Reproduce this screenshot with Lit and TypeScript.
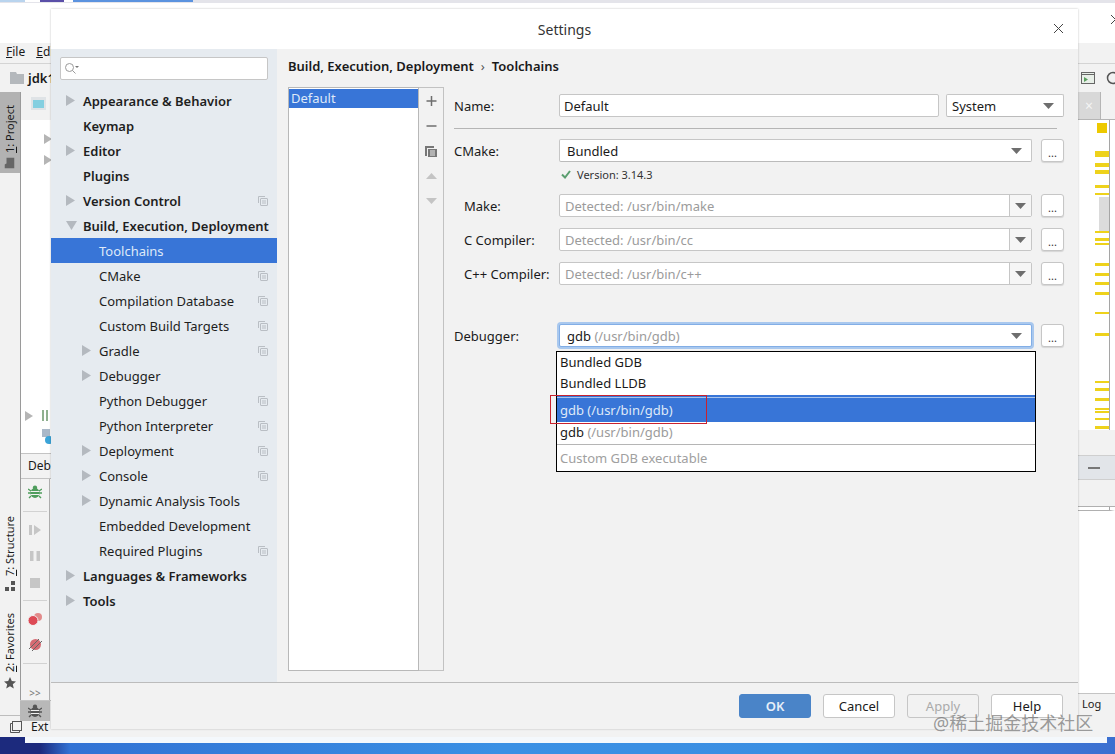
import { LitElement, html, css, svg } from 'lit';
import { customElement } from 'lit/decorators.js';

type TreeItem = { label: string; level: 0 | 1; arrow?: 'right' | 'down'; copy?: boolean; selected?: boolean };

const TREE: TreeItem[] = [
  { label: 'Appearance & Behavior', level: 0, arrow: 'right' },
  { label: 'Keymap', level: 0 },
  { label: 'Editor', level: 0, arrow: 'right' },
  { label: 'Plugins', level: 0 },
  { label: 'Version Control', level: 0, arrow: 'right', copy: true },
  { label: 'Build, Execution, Deployment', level: 0, arrow: 'down' },
  { label: 'Toolchains', level: 1, selected: true },
  { label: 'CMake', level: 1, copy: true },
  { label: 'Compilation Database', level: 1, copy: true },
  { label: 'Custom Build Targets', level: 1, copy: true },
  { label: 'Gradle', level: 1, arrow: 'right', copy: true },
  { label: 'Debugger', level: 1, arrow: 'right' },
  { label: 'Python Debugger', level: 1, copy: true },
  { label: 'Python Interpreter', level: 1, copy: true },
  { label: 'Deployment', level: 1, arrow: 'right', copy: true },
  { label: 'Console', level: 1, arrow: 'right', copy: true },
  { label: 'Dynamic Analysis Tools', level: 1, arrow: 'right' },
  { label: 'Embedded Development', level: 1 },
  { label: 'Required Plugins', level: 1, copy: true },
  { label: 'Languages & Frameworks', level: 0, arrow: 'right' },
  { label: 'Tools', level: 0, arrow: 'right' },
];

// top y and height of the yellow marks in the editor gutter
const MARKS: [number, number][] = [
  [151, 6], [163, 4], [170, 4], [185, 3], [193, 2], [231, 2], [238, 3], [243, 2],
  [263, 3], [273, 3], [282, 3], [292, 3], [312, 2], [333, 3], [381, 2], [388, 3],
  [398, 3], [408, 2], [411, 2], [418, 2], [426, 3],
];

const caret = svg`<svg width="11" height="6" viewBox="0 0 11 6"><path d="M0 0h11L5.500 6z" fill="#6e6e6e"/></svg>`;

const copyIcon = html`<svg class="copy" width="10" height="10" viewBox="0 0 10 10" fill="none" stroke="#b9bec4">
  <path d="M.5 7V.5H7"/><rect x="2.500" y="2.500" width="7" height="7" rx=".5"/><path d="M4 5h4M4 7h4"/></svg>`;

const bug = (color: string) => svg`<svg width="14" height="14" viewBox="0 0 14 14">
  <ellipse cx="7" cy="8" rx="4.500" ry="5" fill="${color}"/><circle cx="7" cy="2.800" r="2.200" fill="${color}"/>
  <path d="M0 4l3 2M14 4l-3 2M0 8h3M11 8h3M1 13l2-2M13 13l-2-2" stroke="${color}" stroke-width="1.400"/>
  <path d="M3 6.500h8M3 9.500h8" stroke="#f2f2f2" stroke-width="1"/></svg>`;

@customElement('app-root')
export class AppRoot extends LitElement {
  static styles = css`
    :host {
      display: block;
      position: relative;
      width: 1115px;
      height: 754px;
      overflow: hidden;
      font-family: 'Noto Sans', 'Open Sans', sans-serif;
      font-size: 13px;
      color: #1a1a1a;
    }
    * { box-sizing: border-box; }

    /* IDE window behind the dialog */
    .ide { display: flex; flex-direction: column; height: 754px; background: #fff; }
    .top-strip { height: 3px; flex: none; background: #e4e4ea; display: flex; }
    .top-strip i { display: block; height: 2px; }
    .ide-title { height: 40px; flex: none; background: #fff; display: flex; justify-content: flex-end; padding: 11px 0 0 0; }
    .ide-menu { height: 20px; flex: none; background: #f2f2f2; display: flex; gap: 11px; padding-left: 6px; font-size: 12px; line-height: 18px; }
    .ide-menu u { text-decoration-thickness: 1px; }
    .ide-tools {
      height: 29px; flex: none; background: #f2f2f2; border-top: 1px solid #d4d4d4;
      display: flex; align-items: center; padding-left: 10px; gap: 3px; font-weight: 600; font-size: 13px;
      justify-content: space-between;
    }
    .ide-tools .crumb { display: flex; align-items: center; gap: 4px; }
    .ide-tools .run { display: flex; align-items: center; gap: 11px; margin-right: -5px; }
    .ide-body { flex: 1; display: flex; min-height: 0; }
    .strip {
      width: 21px; flex: none; background: #f2f2f2; border-right: 1px solid #9a9a9a;
      display: flex; flex-direction: column; position: relative;
    }
    .vtab {
      writing-mode: vertical-rl; transform: rotate(180deg); font-size: 11px; width: 20px;
      display: flex; align-items: center; gap: 5px; line-height: 20px; white-space: nowrap;
    }
    .vtab.project { height: 81px; background: #b2b2b2; padding: 5px 0; }
    .vtab.structure { height: 85px; margin-top: 333px; padding: 0 0 0 0; }
    .vtab.favorites { height: 88px; margin-top: 10px; }
    .ide-main { flex: 1; display: flex; flex-direction: column; min-width: 0; position: relative; }
    .project-pane { height: 361px; flex: none; background: #fff; position: relative; }
    .pane-tool { height: 28px; background: #f2f2f2; border-top: 0; padding: 4px 0 0 10px; }
    .tree-arrow { margin: 14px 0 0 23px; display: block; }
    .debug-tabs { height: 26px; flex: none; background: #f2f2f2; border-top: 1px solid #c4c4c4; border-bottom: 1px solid #c4c4c4; font-size: 12px; padding: 3px 0 0 7px; }
    .debug-pane { flex: 1; background: #f2f2f2; display: flex; flex-direction: column; align-items: center; width: 29px; border-right: 1px solid #b0b0b0; padding-top: 6px; gap: 12px; }
    .debug-pane hr { width: 24px; border: 0; border-top: 1px solid #d2d2d2; margin: 0; }
    .tool-stripe { height: 21px; flex: none; background: #f2f2f2; border-top: 1px solid #c4c4c4; display: flex; margin-left: -1px; }
    .tool-stripe span { width: 30px; background: #b8b8b8; display: flex; align-items: center; justify-content: center; }
    .ide-status { height: 22px; flex: none; background: #f2f2f2; border-top: 1px solid #bdbdbd; display: flex; align-items: center; padding-left: 10px; gap: 9px; font-size: 12px; }
    .desktop { height: 17px; flex: none; background: linear-gradient(90deg, #1c2a7d 0, #1c2a7d 40px, #3172d4 70px, #3a90e4 500px, #3a8ee2 800px, #3b6fd0 1115px); }
    .desktop div { height: 6px; margin-left: 25px; margin-right: 8px; background: #f4f8fc; }

    .gutter { position: absolute; left: 1078px; top: 92px; width: 37px; height: 623px; background: #fff; display: flex; flex-direction: column; }
    .gutter-tab { height: 28px; flex: none; background: #f2f2f2; border-bottom: 1px solid #b5b5b5; }
    .gutter-tab span { display: flex; width: 23px; height: 27px; background: #d8d8d8; border-right: 1px solid #b5b5b5; align-items: center; justify-content: center; color: #f4f4f4; font-size: 14px; }
    .mark { position: absolute; left: 17px; width: 14px; background: #eed21b; }
    .gutter-line { position: absolute; left: 31px; top: 28px; width: 1px; bottom: 0; background: #a5a5a5; }
    .thumb { position: absolute; left: 21px; top: 105px; width: 10px; height: 34px; background: #dbdbdb; }
    .square { position: absolute; left: 19px; top: 31px; width: 10px; height: 10px; background: #edc900; }
    .gutter-bottom { position: absolute; left: 0; top: 338px; width: 37px; height: 285px; display: flex; flex-direction: column; }
    .g-grey { height: 25px; background: #f2f2f2; }
    .g-active { height: 25px; background: #e2e5e9; border-top: 1px solid #cfcfcf; border-bottom: 1px solid #cfcfcf; display: flex; align-items: center; padding-left: 10px; }
    .g-active i { width: 12px; height: 2px; background: #777; display: block; }
    .g-grey2 { height: 27px; background: #f2f2f2; border-bottom: 1px solid #b0b0b0; }
    .g-white { flex: 1; margin-top: 3px; background: #fff; border-top: 1px solid #b0b0b0; border-right: 5px solid #fff; }
    .g-log { height: 22px; background: #f2f2f2; border-top: 1px solid #c4c4c4; font-size: 11px; padding: 2px 0 0 4px; }

    /* Settings dialog */
    .dialog {
      position: absolute; left: 51px; top: 9px; width: 1027px; height: 720px;
      display: flex; flex-direction: column; background: #f2f2f2;
      box-shadow: 0 0 2px rgba(0, 0, 0, .25);
    }
    .title { height: 40px; flex: none; background: #fff; display: flex; align-items: center; justify-content: center; position: relative; font-size: 14px; color: #333; }
    .close { position: absolute; right: 14px; top: 14px; display: block; }
    .content { flex: 1; display: flex; min-height: 0; }
    .side { width: 226px; flex: none; background: #e6ebf0; padding-top: 8px; }
    .search {
      height: 23px; margin: 0 9px; background: #fff; border: 1px solid #c6c6c6; border-radius: 2px;
      display: flex; align-items: center; padding-left: 3px;
    }
    .tree { margin-top: 8px; }
    .row { height: 25px; display: flex; align-items: center; position: relative; color: #1e1e1e; white-space: nowrap; }
    .row.l0 { padding-left: 32px; font-weight: 600; }
    .row.l1 { padding-left: 48px; }
    .row.sel { background: #3875d7; color: #dfe9f8; }
    .row .arrow { position: absolute; top: 7px; }
    .row.l0 .arrow { left: 15px; }
    .row.l1 .arrow { left: 31px; }
    .row .copy { position: absolute; right: 9px; top: 8px; }

    .pane { flex: 1; display: flex; flex-direction: column; padding: 8px 14px 11px 11px; min-width: 0; }
    .breadcrumb { height: 18px; display: flex; align-items: center; font-weight: 600; gap: 7px; white-space: nowrap; }
    .breadcrumb span { font-weight: 400; color: #555; font-size: 13px; }
    .split { flex: 1; display: flex; margin-top: 12px; min-height: 0; }
    .list { width: 131px; flex: none; background: #fff; border: 1px solid #b8b8b8; padding-top: 1px; }
    .list div { height: 19px; background: #3875d7; color: #dfe9f8; line-height: 18px; padding-left: 2px; }
    .list-tools {
      width: 25px; flex: none; border: 1px solid #c2c2c2; border-left: 0; padding-top: 6px;
      display: flex; flex-direction: column; align-items: center; gap: 11px;
    }
    .list-tools svg { display: block; height: 14px; }
    .form { flex: 1; margin-left: 10px; display: flex; flex-direction: column; position: relative; padding-top: 7px; }
    .field { display: flex; height: 23px; align-items: center; }
    .field label { width: 105px; flex: none; }
    .field label.in { padding-left: 10px; }
    .input {
      height: 23px; background: #fff; border: 1px solid #c6c6c6; border-radius: 2px; display: flex; align-items: center;
      padding-left: 4px; min-width: 0; white-space: nowrap;
    }
    .grow { flex: 1; }
    .combo { justify-content: space-between; padding: 0 9px 0 7px; border-bottom-color: #bbb; }
    .combo.sys { width: 118px; margin-left: 7px; padding-left: 5px; }
    .with-more { width: 473px; flex: none; }
    .more {
      width: 23px; height: 23px; margin-left: 9px; flex: none; background: #fff; border: 1px solid #c6c6c6; border-radius: 3px;
      box-shadow: 0 1px 1px rgba(0, 0, 0, .12); display: flex; align-items: flex-end; justify-content: center; font-size: 11px; line-height: 17px; color: #333;
    }
    .hint { color: #9b9b9b; flex: 1; padding-left: 1px; }
    .drop { width: 22px; height: 100%; flex: none; border-left: 1px solid #c6c6c6; background: #f6f6f6; display: flex; align-items: center; justify-content: center; }
    .ph { padding: 0; }
    .ph .hint { padding-left: 5px; }
    .divider { height: 1px; background: #b5b5b5; margin: 11px 7px 10px 0; }
    .version { height: 32px; padding: 5px 0 0 107px; display: flex; gap: 6px; font-size: 11px; color: #333; align-items: flex-start; line-height: 16px; }
    .version svg { margin-top: 3px; }
    .field + .field { margin-top: 11px; }
    .debugger { margin-top: 39px !important; }
    .focus { border-color: #82aee6; box-shadow: 0 0 0 2px #a9c8ee; }
    .gray { color: #9b9b9b; }

    .popup {
      position: absolute; left: 102px; top: 264px; width: 480px; height: 121px; background: #fff; border: 1px solid #000;
      display: flex; flex-direction: column;
    }
    .popup div { padding-left: 3px; white-space: nowrap; }
    .p1 { height: 21px; line-height: 21px; }
    .psel { height: 28px; margin-top: 1px; background: #3875d7; color: #dfe9f8; border-top: 2px solid #3875d7; line-height: 24px; padding-top: 1px; position: relative; }
    .psel::before { content: ''; position: absolute; left: 0; right: 0; top: 0; height: 1px; background: #a9c4ec; }
    .p2 { height: 22px; line-height: 20px; }
    .p3 { height: 27px; line-height: 26px; border-top: 1px solid #b5b5b5; margin-top: 1px; color: #a0a0a0; }
    .red { position: absolute; left: 96px; top: 308px; width: 157px; height: 29px; border: 1px solid #c8222f; }

    .footer {
      height: 47px; flex: none; border-top: 1px solid #bcbcbc; display: flex; justify-content: flex-end; gap: 12px;
      padding: 11px 15px 0 0;
    }
    .btn { width: 72px; height: 24px; background: #fff; border: 1px solid #c6c6c6; border-radius: 3px; display: flex; align-items: center; justify-content: center; }
    .btn.ok { background: #4a84c8; border-color: #4a84c8; color: #e6eef8; font-weight: 600; }
    .btn.off { background: #f2f2f2; color: #aaa; }

    .watermark {
      position: absolute; left: 933px; top: 711px; font-size: 18px; line-height: 24px; color: rgba(95, 95, 95, .62); white-space: nowrap;
      font-family: 'Noto Sans', 'Noto Sans CJK SC', sans-serif;
    }
  `;

  private renderIde() {
    return html`
      <div class="ide">
        <div class="top-strip">
          <i style="width:25px;background:#b9d4ee"></i><i style="width:15px;background:#fff"></i>
          <i style="width:24px;background:#5a4fa8"></i><i style="width:9px;background:#fff"></i>
          <i style="width:120px;background:#5b93df"></i>
        </div>
        <div class="ide-title">
          <svg width="11" height="11" viewBox="0 0 11 11" style="margin-right:-6px"><path d="M1 1l9 9M10 1l-9 9" stroke="#444" fill="none"/></svg>
        </div>
        <div class="ide-menu"><span><u>F</u>ile</span><span><u>E</u>dit</span></div>
        <div class="ide-tools">
          <span class="crumb">
            <svg width="14" height="12" viewBox="0 0 14 12"><path d="M0 0h6l1 2h7v10H0z" fill="#b4b8bc"/></svg>jdk1
          </span>
          <span class="run">
            <svg width="14" height="12" viewBox="0 0 14 12"><rect x=".5" y=".5" width="13" height="11" fill="#e8efe8" stroke="#666"/><path d="M.5 2.500h13" stroke="#666"/><path d="M3 5l4 2.500L3 10z" fill="#5a9e5f"/></svg>
            <svg width="14" height="14" viewBox="0 0 14 14"><circle cx="7" cy="7" r="5.500" fill="none" stroke="#555" stroke-width="1.500"/></svg>
          </span>
        </div>
        <div class="ide-body">
          <div class="strip">
            <div class="vtab project">
              <svg width="11" height="10" viewBox="0 0 11 10" style="transform:rotate(90deg)"><path d="M0 0h4l1 2h6v8H0z" fill="#666"/></svg>
              <span><u>1</u>: Project</span>
            </div>
            <div class="vtab structure">
              <svg width="10" height="10" viewBox="0 0 10 10" style="transform:rotate(180deg)"><path d="M0 6h4v4H0zM6 6h4v4H6zM6 0h4v4H6z" fill="#555"/></svg>
              <span><u>7</u>: Structure</span>
            </div>
            <div class="vtab favorites">
              <svg width="12" height="12" viewBox="0 0 12 12" style="transform:rotate(180deg)"><path d="M6 0l1.800 4 4.200.400-3.200 2.800 1 4.300L6 9.300 2.200 11.500l1-4.300L0 4.400 4.200 4z" fill="#555"/></svg>
              <span><u>2</u>: Favorites</span>
            </div>
          </div>
          <div class="ide-main">
            <div class="project-pane">
              <div class="pane-tool">
                <svg width="15" height="13" viewBox="0 0 15 13"><rect width="15" height="13" fill="#dfe3e6"/><rect x="2" y="3" width="11" height="8" fill="#84cfe0"/></svg>
              </div>
              <svg class="tree-arrow" width="8" height="10" viewBox="0 0 8 10"><path d="M0 0l8 5-8 5z" fill="#b5b5b5"/></svg>
              <svg class="tree-arrow" width="8" height="10" viewBox="0 0 8 10" style="margin-top:11px"><path d="M0 0l8 5-8 5z" fill="#b5b5b5"/></svg>
              <svg style="position:absolute;left:4px;top:318px" width="26" height="40" viewBox="0 0 26 40">
                <path d="M0 1l8 5-8 5z" fill="#b5b5b5"/><path d="M17 0h2v11h-2zM21 0h2v11h-2z" fill="#8fb08f"/>
                <rect x="17" y="19" width="8" height="8" fill="#aab8c8"/><circle cx="24" cy="30" r="4" fill="#3ba4d8"/>
              </svg>
            </div>
            <div class="debug-tabs">Debug</div>
            <div class="debug-pane">
              ${bug('#4f9d5c')}
              <hr />
              <svg width="12" height="12" viewBox="0 0 12 12"><path d="M0 1h3v10H0zM5 1l7 5-7 5z" fill="#c6c6c6"/></svg>
              <svg width="10" height="12" viewBox="0 0 10 12" style="margin-top:2px"><path d="M0 1h3.500v10H0zM6.500 1H10v10H6.500z" fill="#c6c6c6"/></svg>
              <svg width="10" height="10" viewBox="0 0 10 10" style="margin-top:4px"><rect width="10" height="10" fill="#c6c6c6"/></svg>
              <hr />
              <svg width="14" height="13" viewBox="0 0 14 13"><circle cx="10" cy="4" r="4" fill="#e28a8a"/><circle cx="5" cy="7.500" r="5" fill="#dd4a55" stroke="#f2f2f2"/></svg>
              <svg width="13" height="13" viewBox="0 0 13 13"><circle cx="6.500" cy="6.500" r="5.500" fill="#d76a72"/><path d="M0 11L10 1M3 13L13 3" stroke="#666"/></svg>
              <hr />
              <span style="font-size:10px;color:#777;margin-top:10px">&gt;&gt;</span>
            </div>
            <div class="tool-stripe"><span>${bug('#555')}</span></div>
          </div>
        </div>
        <div class="ide-status">
          <svg width="12" height="12" viewBox="0 0 12 12" fill="none" stroke="#555"><rect x="2.500" y=".5" width="9" height="9"/><path d="M2.500 2.500H.5v9h9v-2"/></svg>
          <span>Ext</span>
        </div>
        <div class="desktop"><div></div></div>
      </div>
      <div class="gutter">
        <div class="gutter-tab"><span>×</span></div>
        <div class="square"></div>
        <div class="thumb"></div>
        ${MARKS.map(([y, h]) => html`<div class="mark" style="top:${y - 92}px;height:${h}px"></div>`)}
        <div class="gutter-line"></div>
        <div class="gutter-bottom">
          <div class="g-grey"></div>
          <div class="g-active"><i></i></div>
          <div class="g-grey2"></div>
          <div class="g-white"></div>
          <div class="g-log">Log</div>
        </div>
      </div>
    `;
  }

  private renderTree() {
    return TREE.map(
      (t) => html`
        <div class="row l${t.level} ${t.selected ? 'sel' : ''}">
          ${t.arrow === 'right'
            ? html`<svg class="arrow" width="9" height="11" viewBox="0 0 9 11"><path d="M0 0l9 5.500L0 11z" fill="#b4b9bf"/></svg>`
            : t.arrow === 'down'
              ? html`<svg class="arrow" width="11" height="9" viewBox="0 0 11 9" style="top:8px"><path d="M0 0h11L5.500 9z" fill="#b4b9bf"/></svg>`
              : ''}
          ${t.label} ${t.copy ? copyIcon : ''}
        </div>
      `
    );
  }

  private renderForm() {
    const pathField = (label: string, hint: string) => html`
      <div class="field">
        <label class="in">${label}</label>
        <div class="input with-more ph"><span class="hint">${hint}</span><span class="drop">${caret}</span></div>
        <div class="more">...</div>
      </div>
    `;
    return html`
      <div class="form">
        <div class="field">
          <label>Name:</label>
          <div class="input grow">Default</div>
          <div class="input combo sys">System ${caret}</div>
        </div>
        <div class="divider"></div>
        <div class="field">
          <label>CMake:</label>
          <div class="input combo with-more">Bundled ${caret}</div>
          <div class="more">...</div>
        </div>
        <div class="version">
          <svg width="10" height="9" viewBox="0 0 10 9"><path d="M1 4.500l3 3 5-6.500" fill="none" stroke="#5a9e6f" stroke-width="2"/></svg>
          Version: 3.14.3
        </div>
        ${pathField('Make:', 'Detected: /usr/bin/make')}
        ${pathField('C Compiler:', 'Detected: /usr/bin/cc')}
        ${pathField('C++ Compiler:', 'Detected: /usr/bin/c++')}
        <div class="field debugger">
          <label>Debugger:</label>
          <div class="input combo with-more focus"><span>gdb <span class="gray">(/usr/bin/gdb)</span></span> ${caret}</div>
          <div class="more">...</div>
        </div>
        <div class="popup">
          <div class="p1">Bundled GDB</div>
          <div class="p1">Bundled LLDB</div>
          <div class="psel">gdb (/usr/bin/gdb)</div>
          <div class="p2">gdb <span class="gray">(/usr/bin/gdb)</span></div>
          <div class="p3">Custom GDB executable</div>
        </div>
        <div class="red"></div>
      </div>
    `;
  }

  render() {
    return html`
      ${this.renderIde()}
      <div class="dialog">
        <div class="title">
          Settings
          <svg class="close" width="11" height="11" viewBox="0 0 11 11"><path d="M1 1l9 9M10 1l-9 9" stroke="#444" fill="none"/></svg>
        </div>
        <div class="content">
          <div class="side">
            <div class="search">
              <svg width="15" height="13" viewBox="0 0 15 13" fill="none" stroke="#9a9a9a">
                <circle cx="5.500" cy="5.500" r="4"/><path d="M8.500 8.500l3 3"/><path d="M11 4h4l-2 2z" fill="#777" stroke="none"/>
              </svg>
            </div>
            <div class="tree">${this.renderTree()}</div>
          </div>
          <div class="pane">
            <div class="breadcrumb">Build, Execution, Deployment <span>›</span> Toolchains</div>
            <div class="split">
              <div class="list"><div>Default</div></div>
              <div class="list-tools">
                <svg width="11" height="14" viewBox="0 0 11 14"><path d="M5.500 2v10M.5 7h10" stroke="#6e6e6e" stroke-width="1.500"/></svg>
                <svg width="11" height="14" viewBox="0 0 11 14"><path d="M.5 7h10" stroke="#6e6e6e" stroke-width="1.500"/></svg>
                <svg width="12" height="14" viewBox="0 0 12 14"><path d="M0 2h9v2H2v8H0z" fill="#777"/><path d="M3 5h9v8H3z" fill="#777"/><path d="M5 7h5M5 9h5M5 11h5" stroke="#eee"/></svg>
                <svg width="11" height="14" viewBox="0 0 11 14"><path d="M0 10l5.500-6 5.500 6z" fill="#c4c4c4"/></svg>
                <svg width="11" height="14" viewBox="0 0 11 14"><path d="M0 4l5.500 6 5.500-6z" fill="#c4c4c4"/></svg>
              </div>
              ${this.renderForm()}
            </div>
          </div>
        </div>
        <div class="footer">
          <div class="btn ok">OK</div>
          <div class="btn">Cancel</div>
          <div class="btn off">Apply</div>
          <div class="btn">Help</div>
        </div>
      </div>
      <div class="watermark">@稀土掘金技术社区</div>
    `;
  }
}
